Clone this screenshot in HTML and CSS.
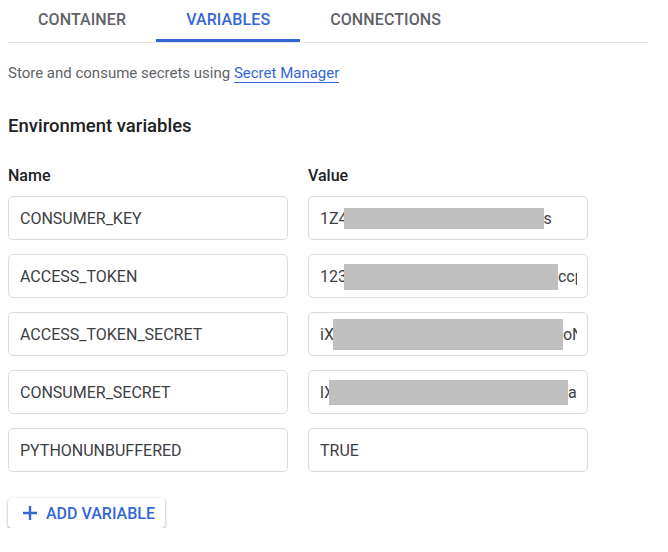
FILE: index.html
```html
<!DOCTYPE html>
<html>
<head>
<meta charset="utf-8">
<link rel="stylesheet" href="styles.css">
</head>
<body>
<div class="page">
  <nav class="tabs">
    <div class="tab">CONTAINER</div>
    <div class="tab active">VARIABLES</div>
    <div class="tab">CONNECTIONS</div>
  </nav>
  <p class="desc">Store and consume secrets using <a class="link">Secret Manager</a></p>
  <h2 class="title">Environment variables</h2>
  <div class="grid">
    <div class="label">Name</div>
    <div class="label">Value</div>
    <div class="field"><div class="val">CONSUMER_KEY</div></div>
    <div class="field"><div class="val"><span>1Z4</span><span class="mask m1"></span><span>s</span></div></div>
    <div class="field"><div class="val">ACCESS_TOKEN</div></div>
    <div class="field"><div class="val"><span>123</span><span class="mask m2"></span><span>ccp</span></div></div>
    <div class="field"><div class="val">ACCESS_TOKEN_SECRET</div></div>
    <div class="field"><div class="val"><span>iX</span><span class="mask m3"></span><span>oN</span></div></div>
    <div class="field"><div class="val">CONSUMER_SECRET</div></div>
    <div class="field"><div class="val"><span>lX</span><span class="mask m4"></span><span>aY</span></div></div>
    <div class="field"><div class="val">PYTHONUNBUFFERED</div></div>
    <div class="field"><div class="val">TRUE</div></div>
  </div>
  <button class="add">
    <svg width="16" height="16" viewBox="0 0 16 16"><path d="M8 1v14M1 8h14" stroke="#3367d6" stroke-width="2.4" fill="none"/></svg>
    <span>ADD VARIABLE</span>
  </button>
</div>
</body>
</html>
```
FILE: styles.css
```css
* { box-sizing: border-box; }
body {
  margin: 0;
  background: #fff;
  font-family: Roboto, "Liberation Sans", sans-serif;
  color: #202124;
}
.page {
  width: 648px;
  padding-left: 8px;
}
.tabs {
  display: flex;
  border-bottom: 1px solid #e3e3e3;
  height: 43px;
}
.tab {
  padding: 0 30px;
  height: 42px;
  display: flex;
  align-items: center;
  font-size: 16px;
  font-weight: 500;
  letter-spacing: 0.1px;
  color: #5f6368;
  border-bottom: 3px solid transparent;
}
.tab.active {
  color: #3367d6;
  border-bottom-color: #3367d6;
}
.desc {
  margin: 20px 0 0;
  font-size: 15px;
  line-height: 20px;
  color: #5f6368;
}
.link {
  color: #3367d6;
  text-decoration: none;
  border-bottom: 1px solid #3367d6;
}
.title {
  margin: 31px 0 0;
  font-size: 18.5px;
  font-weight: 500;
  line-height: 24px;
  color: #202124;
}
.grid {
  margin-top: 28px;
  display: grid;
  grid-template-columns: 280px 280px;
  column-gap: 20px;
  row-gap: 14px;
}
.label {
  font-size: 16px;
  font-weight: 500;
  line-height: 20px;
  margin-bottom: -4px;
}
.field {
  height: 44px;
  border: 1px solid #dadce0;
  border-radius: 5px;
  padding: 0 10px 0 11px;
  display: flex;
  align-items: center;
}
.val {
  display: flex;
  align-items: center;
  overflow: hidden;
  white-space: nowrap;
  width: 100%;
  font-size: 16px;
  color: #3c4043;
}
.val span { flex-shrink: 0; }
.mask { background: #c0c0c0; display: block; }
.m1 { width: 200px; height: 24px; margin-left: -4px; margin-top: -3px; }
.m2 { width: 214px; height: 26px; margin-left: -3px; margin-top: 2px; }
.m3 { width: 230px; height: 31px; margin-left: -1px; }
.m4 { width: 239px; height: 25px; margin-left: -5px; }
.add {
  margin-top: 26px;
  height: 30px;
  width: 157px;
  display: flex;
  align-items: center;
  gap: 8px;
  padding: 0 0 0 14px;
  border: none;
  border-radius: 4px;
  background: #fff;
  box-shadow: 0 1px 3px rgba(60,64,67,.4), 0 2px 2px rgba(60,64,67,.15);
  font-family: Roboto, "Liberation Sans", sans-serif;
  font-size: 16px;
  font-weight: 500;
  color: #3367d6;
}
.add svg { display: block; }
```
